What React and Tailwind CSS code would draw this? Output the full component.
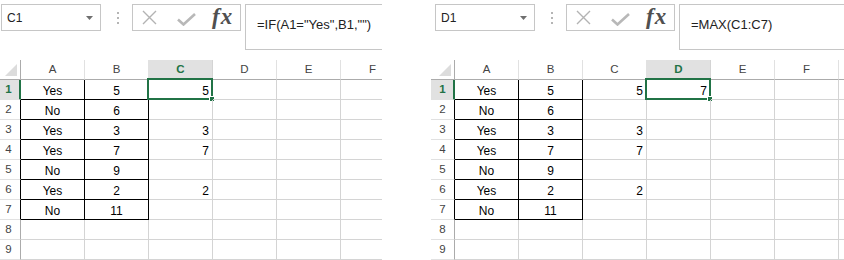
import React from 'react'

const colA = ['Yes', 'No', 'Yes', 'Yes', 'No', 'Yes', 'No']
const colB = ['5', '6', '3', '7', '9', '2', '11']
const colC = ['5', '', '3', '7', '', '2', '']
const letters = ['A', 'B', 'C', 'D', 'E', 'F', 'G']

function Toolbar({ name, formula }) {
  return (
    <div className="flex items-start pt-[4px] h-[50px]">
      {/* name box */}
      <div className="ml-[4px] w-[100px] h-[27px] shrink-0 border border-[#c6c6c6] bg-white flex items-center justify-between pl-[5px] pr-[7px]">
        <span className="text-[12px] text-[#222] leading-none pt-[1px]">{name}</span>
        <svg width="7" height="4" viewBox="0 0 7 4">
          <path d="M0 0 L7 0 L3.5 4 Z" fill="#6f6f6f" />
        </svg>
      </div>
      {/* grip dots */}
      <div className="ml-[16px] w-[2px] shrink-0 flex flex-col gap-[3px] pt-[8px]">
        <div className="w-[2px] h-[2px] bg-[#b5b5b5]" />
        <div className="w-[2px] h-[2px] bg-[#b5b5b5]" />
        <div className="w-[2px] h-[2px] bg-[#b5b5b5]" />
      </div>
      {/* cancel / enter / fx */}
      <div className="ml-[13px] w-[109px] h-[27px] shrink-0 border border-[#c6c6c6] bg-white flex items-center">
        <svg className="ml-[9px]" width="15" height="15" viewBox="0 0 15 15">
          <path d="M1 1 L14 14 M14 1 L1 14" stroke="#b3b3b3" strokeWidth="1.4" fill="none" />
        </svg>
        <svg className="ml-[20px] mt-[3px]" width="19" height="13" viewBox="0 0 19 13">
          <path d="M1 6.5 L6.5 11.5 L18 1" stroke="#b8b8b8" strokeWidth="2.6" fill="none" />
        </svg>
        <span className="ml-[16px] text-[23px] italic font-semibold text-[#505050] leading-none tracking-[1px] pb-[3px]" style={{ fontFamily: '"Liberation Serif", serif' }}>
          fx
        </span>
      </div>
      {/* formula bar */}
      <div className="ml-[4px] w-[700px] h-[46px] shrink-0 border-l border-t border-b border-[#c6c6c6] bg-white pl-[11px] pt-[7px]">
        <span className="text-[13px] text-[#222] leading-none whitespace-nowrap">{formula}</span>
      </div>
    </div>
  )
}

function Sheet({ selCol, showD }) {
  const cells = []
  for (let r = 0; r < 10; r++) {
    for (let c = 0; c < 8; c++) {
      const key = r + '-' + c
      if (r === 0 && c === 0) {
        cells.push(
          <div key={key} className="relative border-r border-b border-[#ababab] bg-white">
            <svg className="absolute right-[3px] bottom-[3px]" width="12" height="12" viewBox="0 0 12 12">
              <path d="M12 0 L12 12 L0 12 Z" fill="#dcdcdc" />
            </svg>
          </div>
        )
      } else if (r === 0) {
        const sel = c - 1 === selCol
        cells.push(
          <div
            key={key}
            className={
              'flex items-center justify-center border-r border-b text-[11.5px] leading-[13px] ' +
              (sel
                ? 'bg-[#e1e1e1] border-r-[#d4d4d4] border-b-[#217346] text-[#217346] font-bold'
                : 'bg-white border-r-[#e1e1e1] border-b-[#ababab] text-[#444]')
            }
          >
            {letters[c - 1] === 'G' ? '' : letters[c - 1]}
          </div>
        )
      } else if (c === 0) {
        const sel = r === 1
        const inBox = r >= 2 && r <= 7
        cells.push(
          <div
            key={key}
            className={
              'flex items-center justify-center border-b border-b-[#e1e1e1] text-[11.5px] leading-[13px] ' +
              (sel
                ? 'bg-[#e1e1e1] border-r-2 border-r-[#217346] text-[#217346] font-bold pl-[1px]'
                : inBox
                ? 'bg-white border-r border-r-black text-[#444]'
                : 'bg-white border-r border-r-[#ababab] text-[#444]')
            }
          >
            {r}
          </div>
        )
      } else {
        const col = c - 1
        const boxed = col <= 1 && r <= 7
        let text = ''
        let align = 'justify-end pr-[3px]'
        if (r <= 7) {
          if (col === 0) text = colA[r - 1]
          if (col === 1) text = colB[r - 1]
          if (col === 2) text = colC[r - 1]
          if (col === 3 && showD && r === 1) text = '7'
          if (col <= 1) align = 'justify-center'
        }
        const isSel = r === 1 && col === selCol
        cells.push(
          <div
            key={key}
            className={
              'relative flex items-end pb-[1px] text-[12px] leading-[14px] text-black border-r border-b ' +
              align +
              (boxed ? ' border-black' : ' border-[#d4d4d4]')
            }
          >
            {text}
            {isSel && (
              <>
                <div className="absolute -left-[2px] -top-[2px] w-[66px] h-[22px] border-2 border-[#217346]" />
                <div className="absolute left-[60px] top-[16px] w-[6px] h-[6px] bg-[#217346] border border-white" />
              </>
            )}
          </div>
        )
      }
    }
  }
  return (
    <div className="mt-[10px] grid grid-cols-[24px_repeat(7,64px)] auto-rows-[20px] w-max">
      {cells}
    </div>
  )
}

function Panel({ name, formula, selCol, showD, className }) {
  return (
    <div className={'overflow-hidden h-[260px] shrink-0 ' + className}>
      <div className={showD ? '' : '-ml-[3px]'}>
        <Toolbar name={name} formula={formula} />
        <Sheet selCol={selCol} showD={showD} />
      </div>
    </div>
  )
}

export default function App() {
  return (
    <div
      className="w-[844px] h-[260px] bg-white flex overflow-hidden"
      style={{ fontFamily: '"Liberation Sans", Arial, sans-serif' }}
    >
      <Panel name="C1" formula={'=IF(A1="Yes",B1,"")'} selCol={2} showD={false} className="w-[382px]" />
      <Panel name="D1" formula="=MAX(C1:C7)" selCol={3} showD={true} className="ml-[49px] w-[413px]" />
    </div>
  )
}
